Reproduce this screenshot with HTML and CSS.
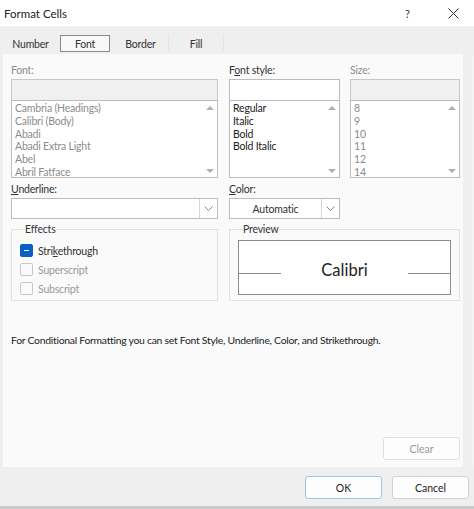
FILE: index.html
```html
<!DOCTYPE html>
<html lang="en">
<head>
    <meta charset="UTF-8">
    <title>Format Cells</title>
    <link rel="stylesheet" href="styles.css">
</head>
<body>

<div class="dialog">
    <div class="titlebar">
        <span class="title">Format Cells</span>
        <span class="help">?</span>
        <span class="close">
            <svg width="11" height="11" viewBox="0 0 11 11"><path d="M0.5 0.5 L10.5 10.5 M10.5 0.5 L0.5 10.5" stroke="#333" stroke-width="1" fill="none"/></svg>
        </span>
    </div>

    <div class="tabs">
        <span class="tab tab-number">Number</span>
        <span class="tab tab-font active">Font</span>
        <span class="tab tab-border">Border</span>
        <span class="tab tab-fill">Fill</span>
    </div>

    <div class="body">
        <div class="panel">
            <div class="row">
                <div class="col col-font">
                    <div class="label disabled">Font:</div>
                    <div class="input grey"></div>
                    <div class="list">
                        <div class="items disabled">
                            <div>Cambria (Headings)</div>
                            <div>Calibri (Body)</div>
                            <div>Abadi</div>
                            <div>Abadi Extra Light</div>
                            <div>Abel</div>
                            <div>Abril Fatface</div>
                        </div>
                        <div class="scroll"><span class="up"></span><span class="down"></span></div>
                    </div>
                </div>
                <div class="col col-style">
                    <div class="label">F<u>o</u>nt style:</div>
                    <div class="input"></div>
                    <div class="list">
                        <div class="items">
                            <div>Regular</div>
                            <div>Italic</div>
                            <div>Bold</div>
                            <div>Bold Italic</div>
                        </div>
                        <div class="scroll"><span class="up"></span><span class="down"></span></div>
                    </div>
                </div>
                <div class="col col-size">
                    <div class="label disabled">Size:</div>
                    <div class="input grey"></div>
                    <div class="list">
                        <div class="items disabled">
                            <div>8</div>
                            <div>9</div>
                            <div>10</div>
                            <div>11</div>
                            <div>12</div>
                            <div>14</div>
                        </div>
                        <div class="scroll"><span class="up"></span><span class="down"></span></div>
                    </div>
                </div>
            </div>

            <div class="row row-second">
                <div class="col col-font">
                    <div class="label"><u>U</u>nderline:</div>
                    <div class="select">
                        <span class="select-value"></span>
                        <span class="chevron"><svg width="9" height="6" viewBox="0 0 9 6"><path d="M0.5 0.5 L4.5 4.5 L8.5 0.5" stroke="#888" fill="none"/></svg></span>
                    </div>
                </div>
                <div class="col col-style">
                    <div class="label"><u>C</u>olor:</div>
                    <div class="select">
                        <span class="select-value center">Automatic</span>
                        <span class="chevron"><svg width="9" height="6" viewBox="0 0 9 6"><path d="M0.5 0.5 L4.5 4.5 L8.5 0.5" stroke="#888" fill="none"/></svg></span>
                    </div>
                </div>
            </div>

            <div class="row row-third">
                <fieldset class="group effects">
                    <legend>Effects</legend>
                    <div class="check">
                        <span class="box on"><span class="dash"></span></span>
                        <span>Stri<u>k</u>ethrough</span>
                    </div>
                    <div class="check disabled">
                        <span class="box"></span>
                        <span>Superscript</span>
                    </div>
                    <div class="check disabled">
                        <span class="box"></span>
                        <span>Subscript</span>
                    </div>
                </fieldset>
                <fieldset class="group preview">
                    <legend>Preview</legend>
                    <div class="preview-box">
                        <span class="line"></span>
                        <span class="sample">Calibri</span>
                        <span class="line"></span>
                    </div>
                </fieldset>
            </div>

            <p class="info">For Conditional Formatting you can set Font Style, Underline, Color, and Strikethrough.</p>

            <div class="clear-row">
                <button class="btn disabled-btn">Clear</button>
            </div>
        </div>
        <div class="panel-edge"></div>
    </div>

    <div class="footer">
        <button class="btn ok">OK</button>
        <button class="btn">Cancel</button>
    </div>
</div>

</body>
</html>
```

FILE: styles.css
```css
/* Format Cells dialog */
body { margin: 0; font-family: Lato, 'Open Sans', Arial, sans-serif; font-size: 10.5px; letter-spacing: -0.2px; color: #222; background: #efefef; }
.dialog { width: 474px; height: 509px; display: flex; flex-direction: column; }

.titlebar { height: 26px; background: #fff; display: flex; align-items: center; padding-left: 4px; }
.title { font-size: 11.5px; color: #222; flex: 1; letter-spacing: 0; }
.help { font-size: 11px; color: #333; width: 12px; margin-right: 31px; }
.close { width: 11px; margin-right: 15px; display: flex; }

.tabs { height: 28px; background: #efefef; display: flex; align-items: flex-start; padding: 9px 0 0 3px; box-sizing: border-box; }
.tab { height: 17px; display: flex; align-items: center; justify-content: center; color: #333; }
.tab-number { width: 55px; }
.tab-font { width: 50px; margin: 0 3px 0 2px; }
.tab-border { width: 55px; border-right: 1px solid #e6e6e6; }
.tab-fill { width: 54px; border-right: 1px solid #e6e6e6; }
.tab.active { border: 1px solid #8a8a8a; background: #f8f8f8; box-sizing: border-box; }

.body { flex: 1; display: flex; padding-left: 3px; }
.panel { width: 449px; background: #fafafa; padding: 9px 3px 7px 8px; display: flex; flex-direction: column; }
.panel-edge { width: 10px; border-right: 1px solid #f6f6f6; box-sizing: border-box; }

.row { display: flex; }
.col-font { width: 207px; margin-right: 11px; }
.col-style { width: 111px; margin-right: 10px; }
.col-size { width: 110px; }

.label { height: 16px; line-height: 14px; color: #333; }
.label u, .check u { text-decoration-thickness: 1px; text-underline-offset: 1px; }
.disabled { color: #8c8c8c; }

.input { height: 21px; border: 1px solid #bcbcbc; border-bottom: none; background: #fff; box-sizing: border-box; }
.input.grey { background: #f0f0f0; border-color: #c8c8c8; }

.list { height: 78px; border: 1px solid #bcbcbc; background: #fff; box-sizing: border-box; display: flex; }
.items { flex: 1; padding: 1px 0 0 3px; line-height: 12.8px; }
.items.disabled { color: #8c8c8c; }
.scroll { width: 15px; display: flex; flex-direction: column; justify-content: space-between; align-items: center; padding: 5px 0 4px; }
.up { width: 0; height: 0; border-left: 4px solid transparent; border-right: 4px solid transparent; border-bottom: 4px solid #b0b0b0; }
.down { width: 0; height: 0; border-left: 4px solid transparent; border-right: 4px solid transparent; border-top: 4px solid #b0b0b0; }

.row-second { margin-top: 4px; }
.select { height: 21px; border: 1px solid #bcbcbc; background: #fff; box-sizing: border-box; display: flex; }
.select-value { flex: 1; display: flex; align-items: center; }
.select-value.center { justify-content: center; color: #333; }
.chevron { width: 17px; border-left: 1px solid #d4d4d4; display: flex; align-items: center; justify-content: center; }

.row-third { margin-top: 4px; }
.group { margin: 0; border: 1px solid #e2e2e2; box-sizing: border-box; height: 78px; padding: 0; }
.group legend { padding: 0; margin-left: 5px; line-height: 12px; color: #333; }
.effects { width: 207px; margin-right: 11px; padding: 6px 0 0 8px; }
.preview { width: 231px; padding: 0 8px 0 8px; }

.check { display: flex; align-items: center; height: 19px; color: #333; }
.check.disabled { color: #999; }
.box { width: 11px; height: 11px; border: 1px solid #c8c8c8; border-radius: 2px; margin-right: 5px; display: flex; align-items: center; justify-content: center; background: #fafafa; }
.box.on { background: #0a5fc0; border-color: #0a5fc0; }
.dash { width: 5px; height: 1.5px; background: #fff; }

.preview-box { height: 55px; margin-top: 5px; border: 1px solid #8c8c8c; box-sizing: border-box; background: #fff; display: flex; align-items: center; justify-content: space-between; }
.line { width: 42px; height: 1px; background: #8c8c8c; margin-top: 12px; }
.sample { font-family: Lato, 'Open Sans', sans-serif; font-size: 16.5px; letter-spacing: 0; color: #222; margin-top: 4px; }

.info { margin: 33px 0 0 0; color: #222; font-size: 10.4px; letter-spacing: -0.27px; }

.clear-row { margin-top: auto; display: flex; justify-content: flex-end; }

.btn { height: 23px; width: 77px; border: 1px solid #d0d0d0; border-radius: 3px; background: #fdfdfd; font-family: Lato, 'Open Sans', Arial, sans-serif; font-size: 10.5px; color: #222; padding: 0; }
.disabled-btn { color: #999; border-color: #e0e0e0; }

.footer { height: 42px; border-bottom: 3px solid #c9c9c9; box-sizing: border-box; display: flex; align-items: center; justify-content: flex-end; padding: 0 5px 0 0; gap: 10px; }
.footer .btn { height: 23px; margin-top: 2px; }
.btn.ok { border-color: #a9c2dd; }
```
